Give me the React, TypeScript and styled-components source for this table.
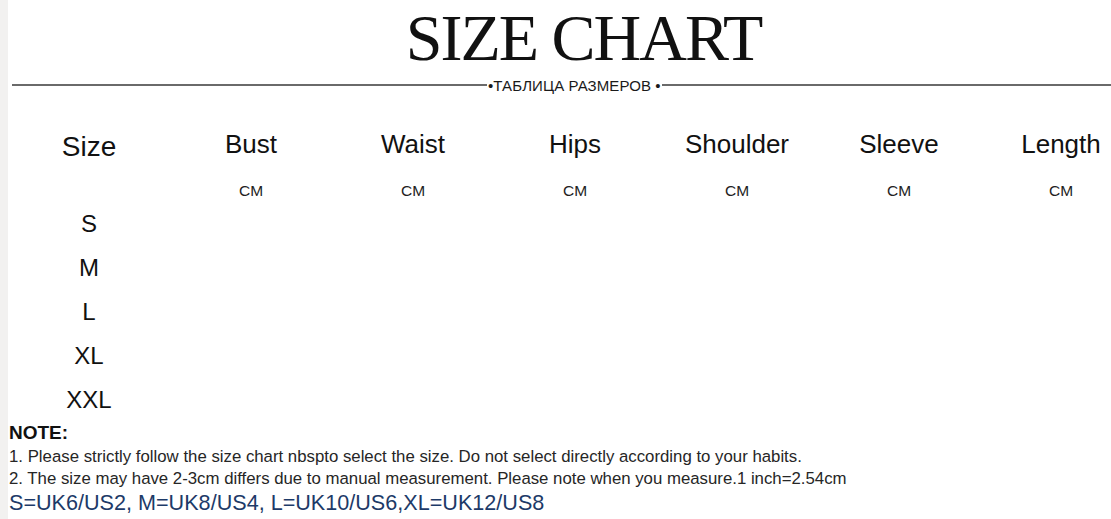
import React from "react";
import styled, { createGlobalStyle } from "styled-components";

const GlobalStyle = createGlobalStyle`
  html, body {
    margin: 0;
    padding: 0;
    background: #f2f1f0;
  }
  body {
    font-family: "Liberation Sans", Arial, sans-serif;
    color: #111;
  }
`;

const Page = styled.div`
  margin-left: 8px;
  width: 1103px;
  height: 519px;
  background: #fff;
  overflow: hidden;
`;

const Title = styled.h1`
  margin: 0;
  padding: 5px 0 0 48px;
  height: 67px;
  text-align: center;
  font-family: "Liberation Serif", "Times New Roman", serif;
  font-weight: 400;
  font-size: 66px;
  line-height: 66px;
  letter-spacing: -2px;
  color: #111;
`;

const Divider = styled.div`
  display: flex;
  align-items: center;
  height: 26px;
  padding-left: 4px;
`;

const Rule = styled.span<{ $width?: number }>`
  display: block;
  height: 2px;
  background: #6a6a6a;
  flex: ${(p) => (p.$width ? `0 0 ${p.$width}px` : "1 1 auto")};
`;

const RuleLabel = styled.span`
  font-size: 15px;
  letter-spacing: 0.1px;
  color: #1a1a1a;
  white-space: nowrap;
  padding: 0 1px;
`;

const Table = styled.div`
  display: grid;
  grid-template-columns: repeat(7, 162px);
  grid-template-rows: 46px 34px repeat(5, 44px);
  padding-top: 24px;
`;

const Head = styled.div<{ $big?: boolean }>`
  text-align: center;
  font-size: ${(p) => (p.$big ? 28 : 26)}px;
  line-height: 46px;
  margin-top: ${(p) => (p.$big ? 2 : -1)}px;
  color: #111;
`;

const Unit = styled.div`
  align-self: end;
  text-align: center;
  font-size: 15.5px;
  line-height: 22px;
  color: #222;
`;

const SizeCell = styled.div`
  grid-column: 1;
  text-align: center;
  font-size: 24px;
  line-height: 44px;
  color: #111;
`;

const Notes = styled.div`
  padding-left: 1px;
`;

const NoteTitle = styled.div`
  font-weight: 700;
  font-size: 19px;
  line-height: 22px;
  margin-bottom: 2px;
  color: #111;
`;

const NoteLine = styled.div`
  font-size: 16.8px;
  line-height: 22px;
  color: #262626;
  white-space: nowrap;
`;

const Conversion = styled.div`
  font-size: 21.6px;
  line-height: 26px;
  color: #1d3a68;
  white-space: nowrap;
`;

const headers = ["Bust", "Waist", "Hips", "Shoulder", "Sleeve", "Length"];
const sizes = ["S", "M", "L", "XL", "XXL"];

export default function App() {
  return (
    <>
      <GlobalStyle />
      <Page>
        <Title>SIZE CHART</Title>
        <Divider>
          <Rule $width={475} />
          <RuleLabel>•ТАБЛИЦА РАЗМЕРОВ •</RuleLabel>
          <Rule />
        </Divider>
        <Table>
          <Head $big>Size</Head>
          {headers.map((h) => (
            <Head key={h}>{h}</Head>
          ))}
          <div />
          {headers.map((h) => (
            <Unit key={h}>CM</Unit>
          ))}
          {sizes.map((s) => (
            <SizeCell key={s}>{s}</SizeCell>
          ))}
        </Table>
        <Notes>
          <NoteTitle>NOTE:</NoteTitle>
          <NoteLine>
            1. Please strictly follow the size chart nbspto select the size. Do not select directly according to your habits.
          </NoteLine>
          <NoteLine>
            2. The size may have 2-3cm differs due to manual measurement. Please note when you measure.1 inch=2.54cm
          </NoteLine>
          <Conversion>S=UK6/US2, M=UK8/US4, L=UK10/US6,XL=UK12/US8</Conversion>
        </Notes>
      </Page>
    </>
  );
}
